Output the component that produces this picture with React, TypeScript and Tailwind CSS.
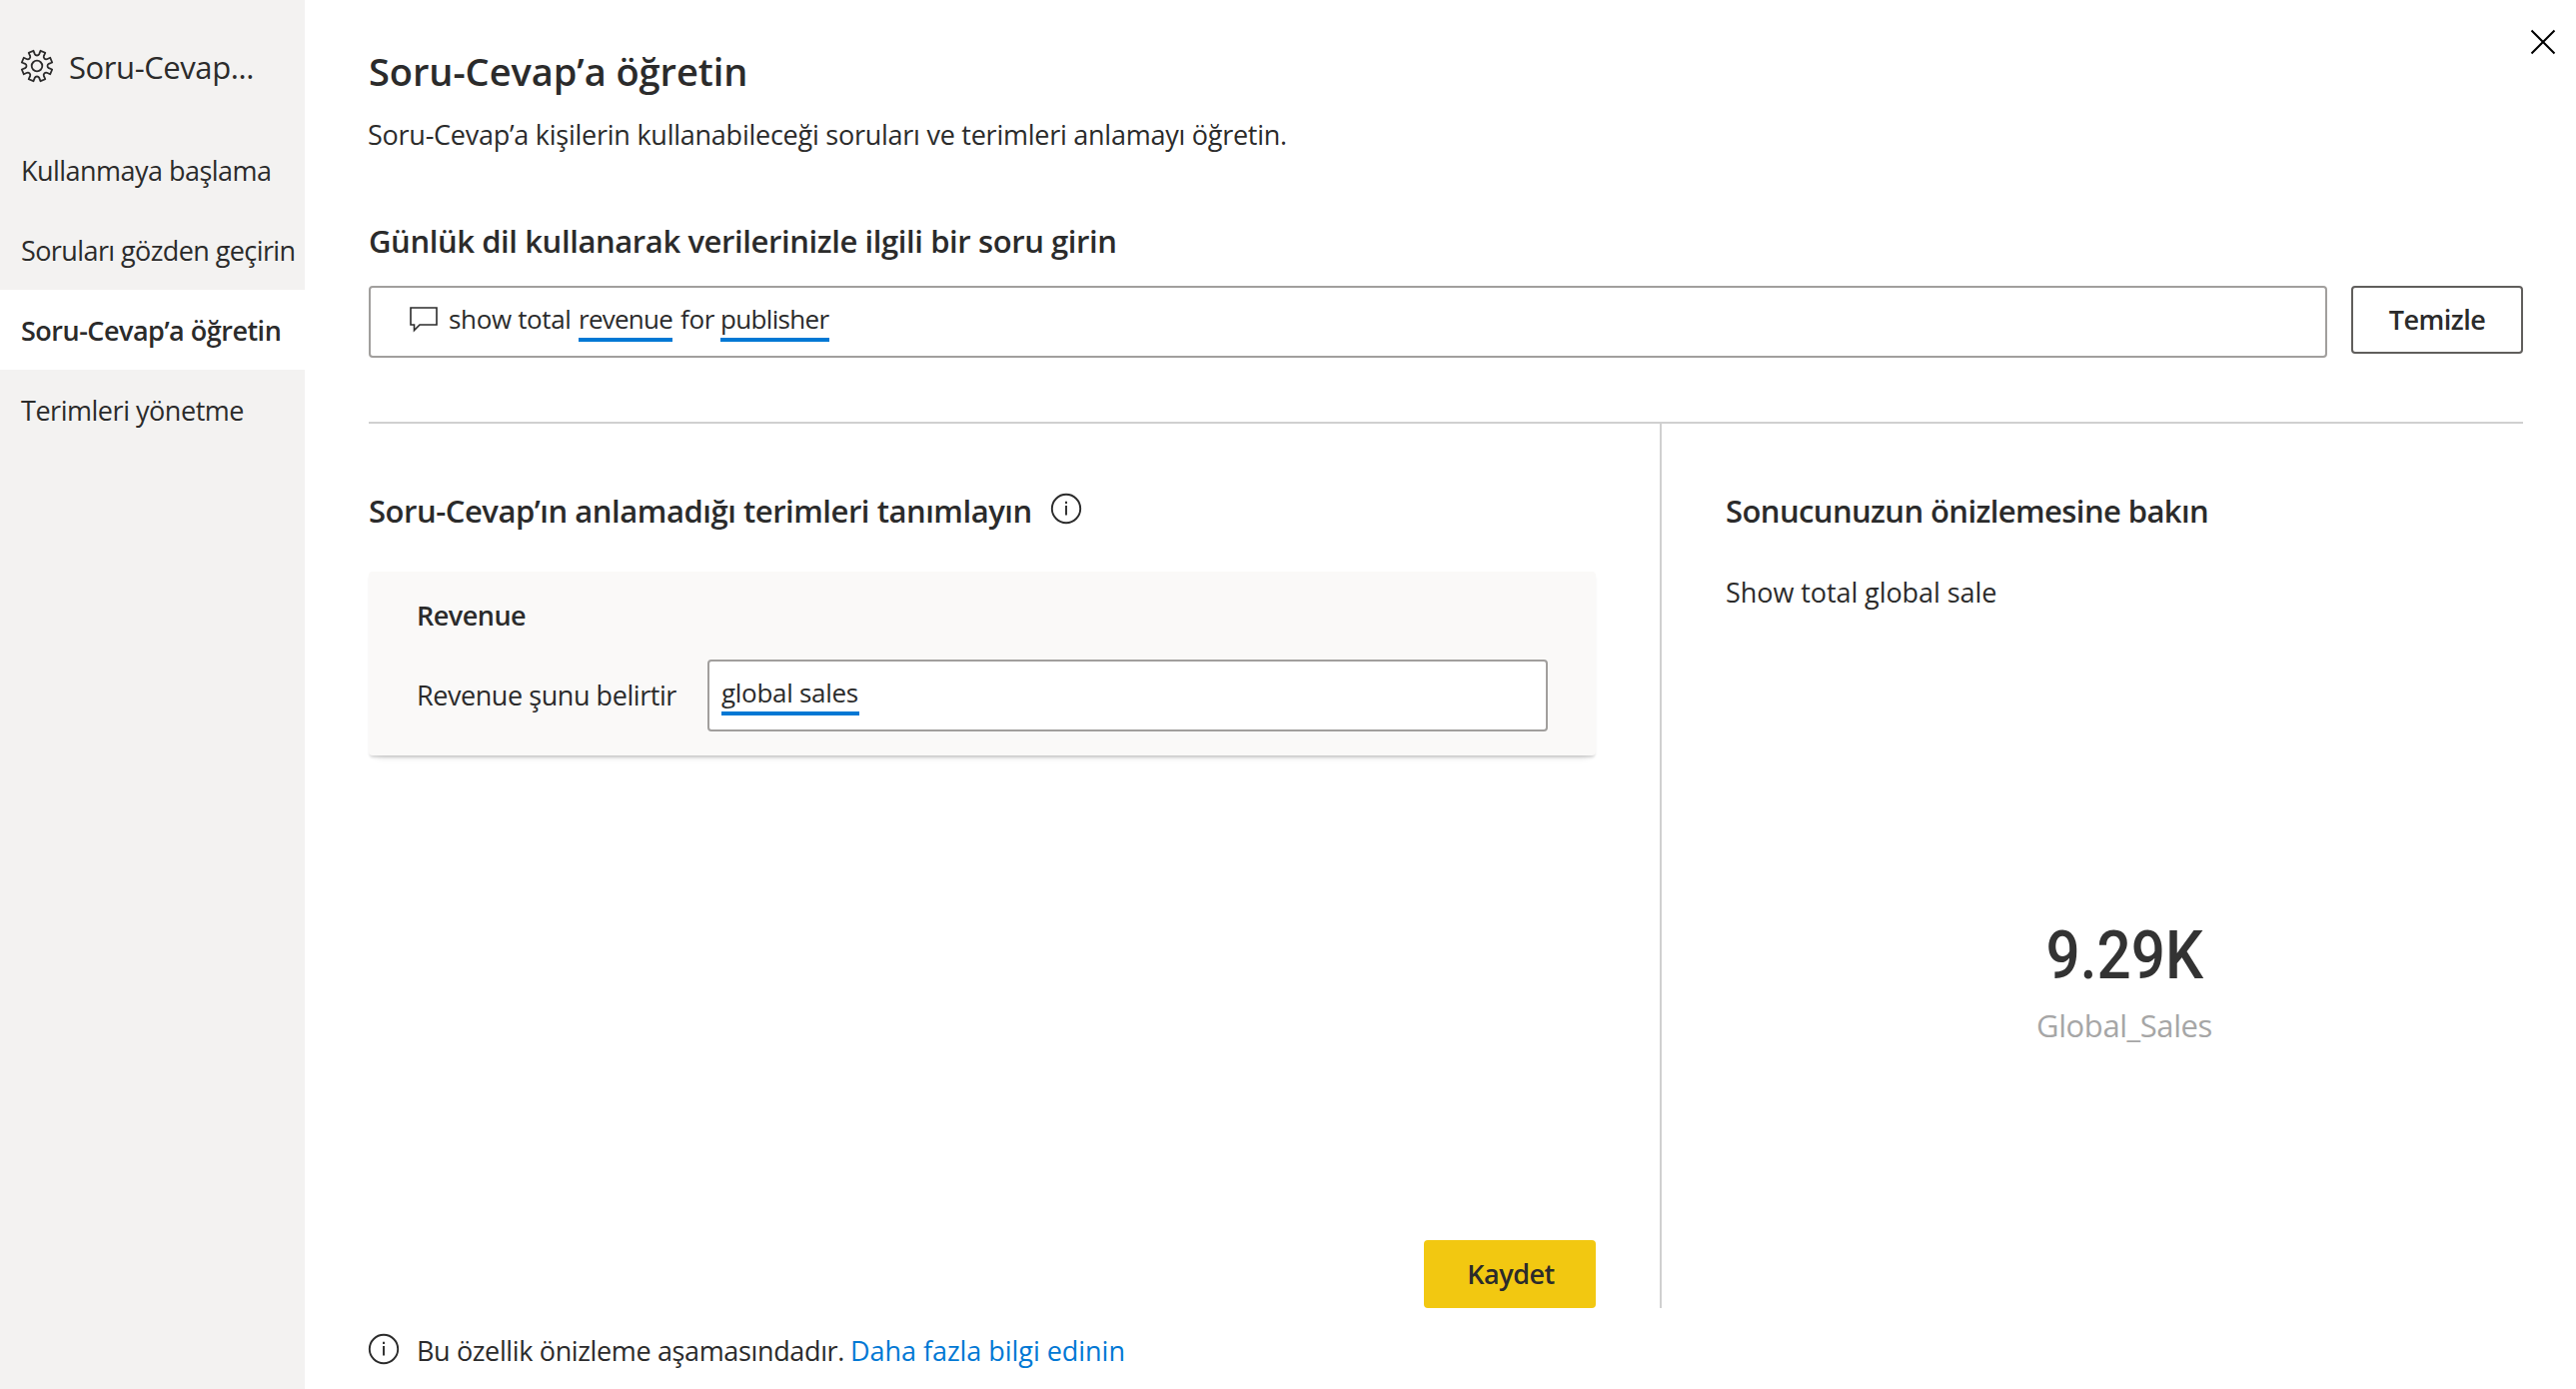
import type { ReactNode } from 'react';

function gearPath() {
  const parts: string[] = [];
  const point = (r: number, deg: number) => {
    const a = (deg * Math.PI) / 180;
    return `${(17 + r * Math.cos(a)).toFixed(2)} ${(17 + r * Math.sin(a)).toFixed(2)}`;
  };
  for (let k = 0; k < 8; k++) {
    const c = 22.5 + k * 45;
    parts.push(`${k ? 'L' : 'M'}${point(12, c - 12)}`, `L${point(15.6, c - 9.5)}`, `L${point(15.6, c + 9.5)}`, `L${point(12, c + 12)}`);
    parts.push(`A2.5 2.5 0 0 0 ${point(12, c + 33)}`);
  }
  return parts.join(' ') + 'Z';
}

function GearIcon() {
  return (
    <svg width="34" height="34" viewBox="0 0 34 34" fill="none" stroke="#2b2b2b" strokeWidth="1.8" strokeLinejoin="round">
      <path d={gearPath()} />
      <circle cx="17" cy="17" r="5.3" />
    </svg>
  );
}

function InfoIcon() {
  return (
    <svg width="32" height="32" viewBox="0 0 32 32" fill="none" stroke="#2b2b2b" strokeWidth="1.9">
      <circle cx="16" cy="16" r="14.2" />
      <path d="M16 13v9.5M16 8.8v2.2" />
    </svg>
  );
}

function NavItem({ children, active, tracking }: { children: ReactNode; active?: boolean; tracking: string }) {
  return (
    <a className={`flex h-20 items-center whitespace-nowrap pl-[21px] pt-0.5 ${tracking} ${active ? 'bg-white font-semibold' : ''}`}>
      {children}
    </a>
  );
}

function Term({ children, className }: { children: ReactNode; className: string }) {
  return <span className={`block h-[42px] border-b-4 border-[#0078d4] ${className}`}>{children}</span>;
}

export default function App() {
  return (
    <div className="flex h-[1390px] w-[2578px] overflow-hidden bg-white font-['Open_Sans',sans-serif] text-[27px] text-[#2b2b2b]">
      <aside className="w-[305px] shrink-0 bg-[#f3f2f1]">
        <div className="flex h-[130px] items-center pl-5 pt-1">
          <div className="-mt-0.5"><GearIcon /></div>
          <h2 className="ml-[15px] text-[31px] tracking-[-0.42px]">Soru-Cevap...</h2>
        </div>
        <nav>
          <NavItem tracking="tracking-[-0.53px]">Kullanmaya başlama</NavItem>
          <NavItem tracking="tracking-[-0.59px]">Soruları gözden geçirin</NavItem>
          <NavItem tracking="tracking-[-0.5px]" active>Soru-Cevap’a öğretin</NavItem>
          <NavItem tracking="tracking-[-0.47px]">Terimleri yönetme</NavItem>
        </nav>
      </aside>

      <main className="relative flex flex-1 flex-col pl-16 pr-[53px] pt-[47px]">
        <button className="absolute right-[20px] top-[29px]" aria-label="Kapat">
          <svg width="26" height="26" viewBox="0 0 26 26" stroke="#000" strokeWidth="2"><path d="M1.5 1.5l23 23M24.5 1.5l-23 23" /></svg>
        </button>
        <h1 className="h-12 text-[38px] font-semibold leading-[48px] tracking-[-0.05px]">Soru-Cevap’a öğretin</h1>
        <p className="-ml-px mt-5 leading-10 tracking-[-0.25px]">Soru-Cevap’a kişilerin kullanabileceği soruları ve terimleri anlamayı öğretin.</p>
        <h3 className="mt-[66px] text-[31px] font-semibold leading-10 tracking-[-0.4px]">Günlük dil kullanarak verilerinizle ilgili bir soru girin</h3>

        <div className="mt-[25px] flex items-start gap-6">
          <div className="flex h-[72px] flex-1 rounded border-2 border-[#a19f9d] pl-[39px] pt-3 text-[26px] leading-[38px]">
            <svg className="mt-[7px]" width="28" height="26" viewBox="0 0 28 26" fill="none" stroke="#2b2b2b" strokeWidth="1.6">
              <path d="M1 1H27V18H10L4.5 23.5V18H1Z" />
            </svg>
            <span className="ml-[11px] w-[130px] tracking-[-0.35px]">show total</span>
            <Term className="w-[94px] tracking-[-0.75px]">revenue</Term>
            <span className="ml-2 w-10 tracking-[-0.3px]">for</span>
            <Term className="w-[109px] tracking-[-0.66px]">publisher</Term>
          </div>
          <button className="h-[68px] w-[172px] rounded border-2 border-[#605e5c] pt-px font-semibold tracking-[-0.5px]">Temizle</button>
        </div>

        <div className="mt-16 flex h-[887px] border-t-2 border-[#d0d0d0]">
          <section className="flex w-[1294px] flex-col border-r-2 border-[#d0d0d0] pr-16 pt-[67px]">
            <div className="flex items-center">
              <h3 className="w-[682px] whitespace-nowrap text-[31px] font-semibold leading-10 tracking-[-0.46px]">Soru-Cevap’ın anlamadığı terimleri tanımlayın</h3>
              <div className="-mt-1"><InfoIcon /></div>
            </div>
            <div className="mt-[41px] w-[1228px] rounded bg-[#faf9f8] py-6 pl-12 pr-12 shadow-[0_3px_3px_-1px_rgba(0,0,0,0.16),0_9px_8px_-8px_rgba(0,0,0,0.12)]">
              <h4 className="font-semibold leading-10 tracking-[-0.5px]">Revenue</h4>
              <div className="mt-6 flex items-center justify-between">
                <label className="pt-px tracking-[-0.44px]">Revenue şunu belirtir</label>
                <div className="flex h-[72px] w-[841px] rounded border-2 border-[#a19f9d] bg-white pl-3 pt-3 text-[26px] leading-[38px]">
                  <Term className="w-[138px] whitespace-nowrap tracking-[-0.3px]">global sales</Term>
                </div>
              </div>
            </div>
            <button className="mt-auto h-[68px] w-[172px] self-end rounded bg-[#f2c811] pl-0.5 font-semibold tracking-[-0.48px]">Kaydet</button>
          </section>
          <section className="flex-1 pl-16 pt-[67px]">
            <h3 className="whitespace-nowrap text-[31px] font-semibold leading-10 tracking-[-0.59px]">Sonucunuzun önizlemesine bakın</h3>
            <p className="mt-[42px] leading-10 tracking-[-0.07px]">Show total global sale</p>
            <div className="mt-[308px] flex flex-col items-center">
              <div className="scale-x-[0.912] font-['Roboto',sans-serif] text-[66px] font-medium leading-[72px] text-[#333]">9.29K</div>
              <div className="mt-[13px] text-[31px] leading-10 tracking-[-0.42px] text-[#a6a6a6]">Global_Sales</div>
            </div>
          </section>
        </div>

        <footer className="mt-[23px] flex items-start leading-10">
          <div className="-ml-px mt-0.5"><InfoIcon /></div>
          <span className="ml-[17px] w-[434px] whitespace-nowrap tracking-[-0.36px]">Bu özellik önizleme aşamasındadır.</span>
          <a className="tracking-[-0.04px] text-[#0078d4]">Daha fazla bilgi edinin</a>
        </footer>
      </main>
    </div>
  );
}
